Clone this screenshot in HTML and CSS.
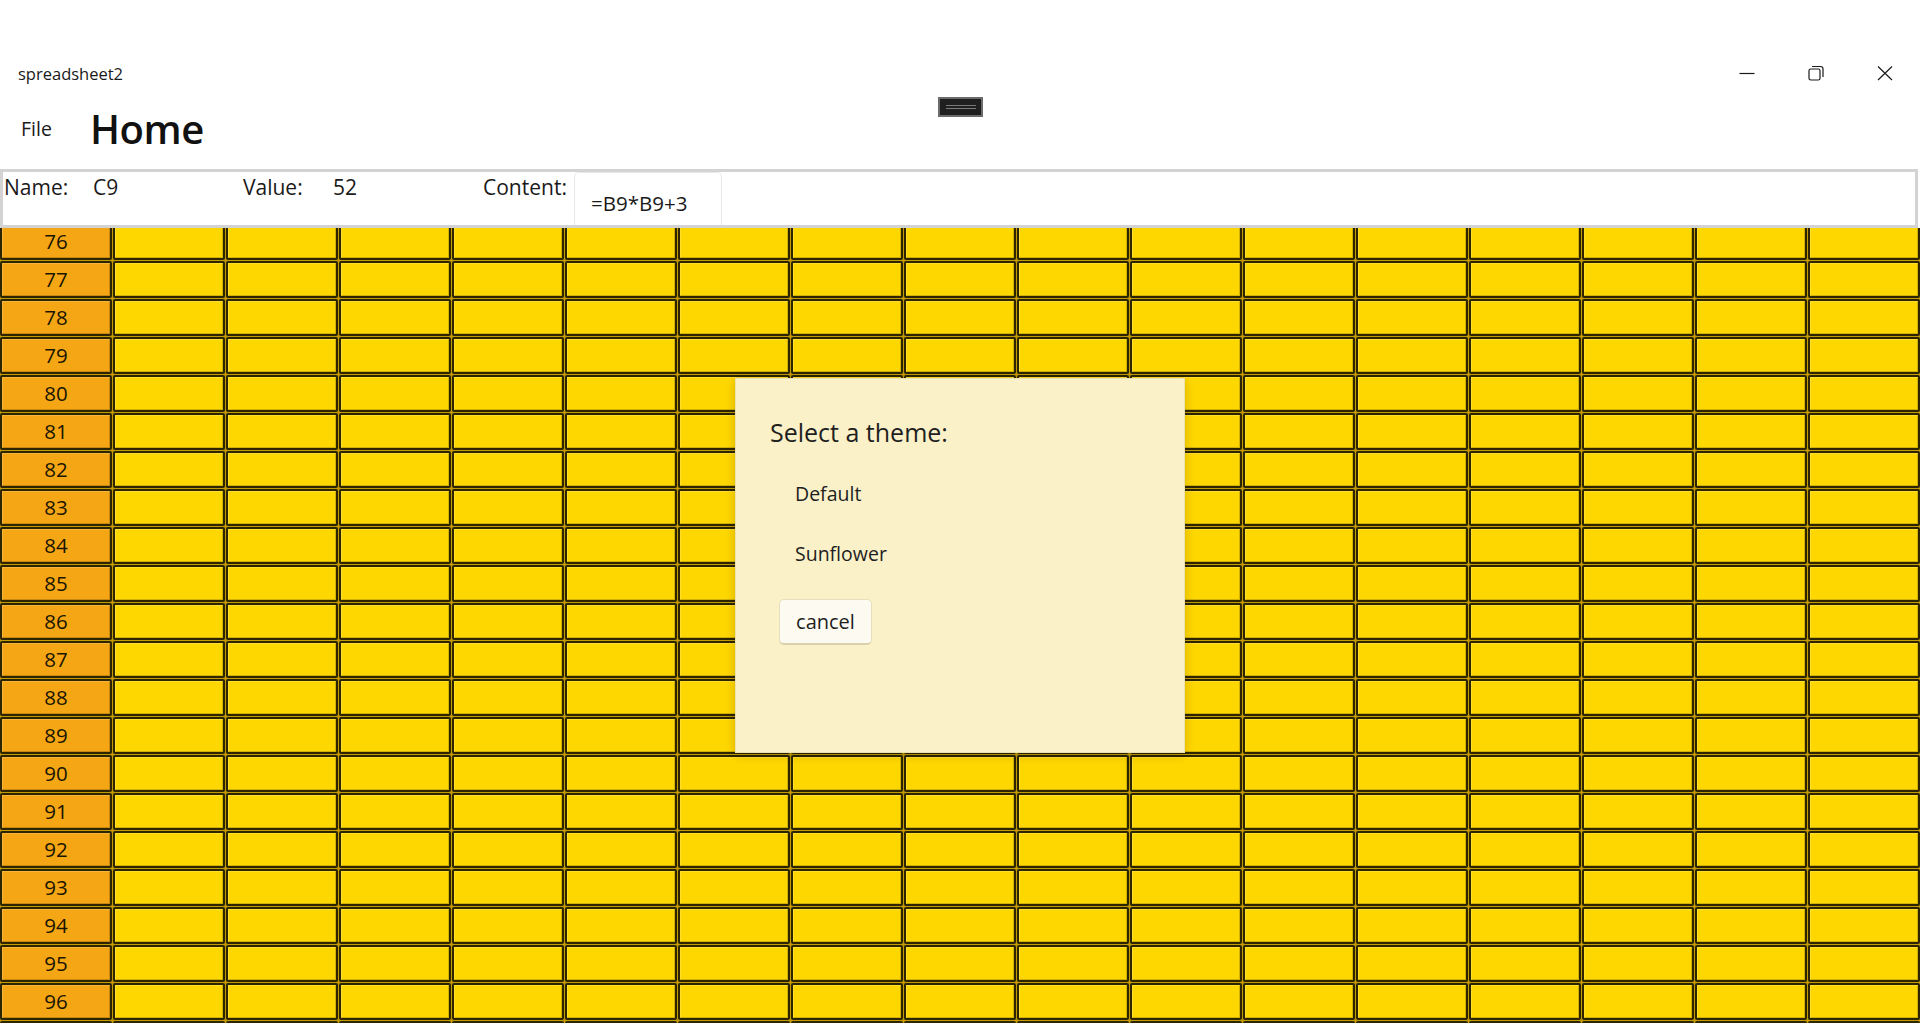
FILE: index.html
```html
<!DOCTYPE html>
<html>
<head>
<meta charset="utf-8">
<title>spreadsheet2</title>
<link rel="stylesheet" href="styles.css">
</head>
<body>
<div class="app">
  <div class="titlebar">
    <span class="apptitle">spreadsheet2</span>
    <div class="winctrls">
      <div class="wbtn"><svg width="16" height="16" viewBox="0 0 16 16"><path d="M0.5 8.5H15.5" stroke="#1a1a1a" stroke-width="1.2" fill="none"/></svg></div>
      <div class="wbtn"><svg width="16" height="16" viewBox="0 0 16 16"><rect x="1" y="4" width="11" height="11" rx="1.8" stroke="#1a1a1a" stroke-width="1.2" fill="none"/><path d="M4 1.5H12.5Q15 1.5 15 4V12" stroke="#1a1a1a" stroke-width="1.2" fill="none"/></svg></div>
      <div class="wbtn"><svg width="16" height="16" viewBox="0 0 16 16"><path d="M1 1.5L15 15M15 1.5L1 15" stroke="#1a1a1a" stroke-width="1.2" fill="none"/></svg></div>
    </div>
  </div>
  <div class="menubar">
    <span class="menu-file">File</span>
    <span class="menu-home">Home</span>
  </div>
  <div class="infobar">
    <span class="lbl lbl-name">Name:</span>
    <span class="val val-name">C9</span>
    <span class="lbl lbl-value">Value:</span>
    <span class="val val-value">52</span>
    <span class="lbl lbl-content">Content:</span>
    <div class="contentbox">=B9*B9+3</div>
  </div>
  <div class="gridview">
    <div class="grid">
      <div class="row"><div class="hd">76</div><span></span><span></span><span></span><span></span><span></span><span></span><span></span><span></span><span></span><span></span><span></span><span></span><span></span><span></span><span></span><span></span></div>
      <div class="row"><div class="hd">77</div><span></span><span></span><span></span><span></span><span></span><span></span><span></span><span></span><span></span><span></span><span></span><span></span><span></span><span></span><span></span><span></span></div>
      <div class="row"><div class="hd">78</div><span></span><span></span><span></span><span></span><span></span><span></span><span></span><span></span><span></span><span></span><span></span><span></span><span></span><span></span><span></span><span></span></div>
      <div class="row"><div class="hd">79</div><span></span><span></span><span></span><span></span><span></span><span></span><span></span><span></span><span></span><span></span><span></span><span></span><span></span><span></span><span></span><span></span></div>
      <div class="row"><div class="hd">80</div><span></span><span></span><span></span><span></span><span></span><span></span><span></span><span></span><span></span><span></span><span></span><span></span><span></span><span></span><span></span><span></span></div>
      <div class="row"><div class="hd">81</div><span></span><span></span><span></span><span></span><span></span><span></span><span></span><span></span><span></span><span></span><span></span><span></span><span></span><span></span><span></span><span></span></div>
      <div class="row"><div class="hd">82</div><span></span><span></span><span></span><span></span><span></span><span></span><span></span><span></span><span></span><span></span><span></span><span></span><span></span><span></span><span></span><span></span></div>
      <div class="row"><div class="hd">83</div><span></span><span></span><span></span><span></span><span></span><span></span><span></span><span></span><span></span><span></span><span></span><span></span><span></span><span></span><span></span><span></span></div>
      <div class="row"><div class="hd">84</div><span></span><span></span><span></span><span></span><span></span><span></span><span></span><span></span><span></span><span></span><span></span><span></span><span></span><span></span><span></span><span></span></div>
      <div class="row"><div class="hd">85</div><span></span><span></span><span></span><span></span><span></span><span></span><span></span><span></span><span></span><span></span><span></span><span></span><span></span><span></span><span></span><span></span></div>
      <div class="row"><div class="hd">86</div><span></span><span></span><span></span><span></span><span></span><span></span><span></span><span></span><span></span><span></span><span></span><span></span><span></span><span></span><span></span><span></span></div>
      <div class="row"><div class="hd">87</div><span></span><span></span><span></span><span></span><span></span><span></span><span></span><span></span><span></span><span></span><span></span><span></span><span></span><span></span><span></span><span></span></div>
      <div class="row"><div class="hd">88</div><span></span><span></span><span></span><span></span><span></span><span></span><span></span><span></span><span></span><span></span><span></span><span></span><span></span><span></span><span></span><span></span></div>
      <div class="row"><div class="hd">89</div><span></span><span></span><span></span><span></span><span></span><span></span><span></span><span></span><span></span><span></span><span></span><span></span><span></span><span></span><span></span><span></span></div>
      <div class="row"><div class="hd">90</div><span></span><span></span><span></span><span></span><span></span><span></span><span></span><span></span><span></span><span></span><span></span><span></span><span></span><span></span><span></span><span></span></div>
      <div class="row"><div class="hd">91</div><span></span><span></span><span></span><span></span><span></span><span></span><span></span><span></span><span></span><span></span><span></span><span></span><span></span><span></span><span></span><span></span></div>
      <div class="row"><div class="hd">92</div><span></span><span></span><span></span><span></span><span></span><span></span><span></span><span></span><span></span><span></span><span></span><span></span><span></span><span></span><span></span><span></span></div>
      <div class="row"><div class="hd">93</div><span></span><span></span><span></span><span></span><span></span><span></span><span></span><span></span><span></span><span></span><span></span><span></span><span></span><span></span><span></span><span></span></div>
      <div class="row"><div class="hd">94</div><span></span><span></span><span></span><span></span><span></span><span></span><span></span><span></span><span></span><span></span><span></span><span></span><span></span><span></span><span></span><span></span></div>
      <div class="row"><div class="hd">95</div><span></span><span></span><span></span><span></span><span></span><span></span><span></span><span></span><span></span><span></span><span></span><span></span><span></span><span></span><span></span><span></span></div>
      <div class="row"><div class="hd">96</div><span></span><span></span><span></span><span></span><span></span><span></span><span></span><span></span><span></span><span></span><span></span><span></span><span></span><span></span><span></span><span></span></div>
      <div class="row"><div class="hd"></div><span></span><span></span><span></span><span></span><span></span><span></span><span></span><span></span><span></span><span></span><span></span><span></span><span></span><span></span><span></span><span></span></div>
    </div>
  </div>
</div>
<div class="draghandle"><div class="grip"></div></div>
<div class="dialog">
  <div class="dlg-title">Select a theme:</div>
  <div class="dlg-item">Default</div>
  <div class="dlg-item">Sunflower</div>
  <button class="dlg-cancel">cancel</button>
</div>
</body>
</html>
```
FILE: styles.css
```css
html, body {
  margin: 0;
  padding: 0;
}
body {
  width: 1920px;
  height: 1034px;
  overflow: hidden;
  background: #ffffff;
  font-family: "Open Sans", "Noto Sans", sans-serif;
  color: #1b1b1b;
  position: relative;
}
.app {
  display: flex;
  flex-direction: column;
}
.titlebar {
  height: 48px;
  padding-top: 49px;
  display: flex;
  align-items: center;
  justify-content: space-between;
}
.apptitle {
  padding-left: 18px;
  font-size: 16.5px;
  color: #1a1a1a;
}
.winctrls {
  display: flex;
  padding-right: 1px;
}
.wbtn {
  width: 69px;
  height: 48px;
  display: flex;
  align-items: center;
  justify-content: center;
}
.menubar {
  height: 62px;
  display: flex;
  align-items: center;
  padding-left: 21px;
  margin-bottom: 10px;
}
.menu-file {
  font-size: 19.5px;
  width: 69px;
}
.menu-home {
  font-size: 40px;
  font-weight: 600;
  color: #111;
  letter-spacing: -0.5px;
}
.infobar {
  height: 53px;
  width: 1912px;
  border: 3px solid #d3d3d3;
  display: flex;
  align-items: flex-start;
  font-size: 21px;
  line-height: 30px;
  color: #1a1a1a;
}
.lbl-name { padding-left: 1px; width: 89px; }
.val-name { width: 150px; }
.lbl-value { width: 90px; }
.val-value { width: 150px; }
.lbl-content { width: 91px; }
.contentbox {
  width: 148px;
  height: 53px;
  box-sizing: border-box;
  border: 1px solid #e7e7e7;
  border-bottom: none;
  border-radius: 5px 5px 0 0;
  padding: 15px 0 0 16px;
  font-size: 20.5px;
  line-height: 30px;
  background: #ffffff;
}
.gridview {
  height: 795px;
  overflow: hidden;
  background: #c39b00;
}
.grid {
  margin-top: -5px;
  display: flex;
  flex-direction: column;
  gap: 1px;
}
.row {
  display: flex;
  gap: 1px;
  height: 37px;
}
.row > * {
  width: 112px;
  height: 37px;
  box-sizing: border-box;
  border: 2px solid #2c2500;
  border-radius: 2px;
  flex: none;
  box-shadow: inset 1px 1px 0 rgba(255,255,255,0.18), inset -1px -1px 0 rgba(0,0,0,0.18);
}
.row > span {
  background: #ffd700;
}
.hd {
  background: #f5a614;
  font-size: 20.5px;
  line-height: 32px;
  text-align: center;
  color: #1a1500;
}
.draghandle {
  position: absolute;
  left: 938px;
  top: 97px;
  width: 45px;
  height: 20px;
  box-sizing: border-box;
  border: 2px solid #6b6b6b;
  background: #1f1f1f;
  display: flex;
  align-items: center;
  justify-content: center;
}
.grip {
  width: 30px;
  height: 4px;
  box-sizing: border-box;
  border-top: 1px solid #7a7a7a;
  border-bottom: 1px solid #7a7a7a;
}
.dialog {
  position: absolute;
  left: 735px;
  top: 378px;
  width: 450px;
  height: 375px;
  box-sizing: border-box;
  background: #faf1c9;
  border: 1px solid #ebe1b0;
  box-shadow: 0 2px 10px rgba(0,0,0,0.18);
  padding: 36px 0 0 34px;
  display: flex;
  flex-direction: column;
  align-items: flex-start;
}
.dlg-title {
  font-size: 25px;
  line-height: 34px;
  color: #1e1e1e;
  margin-bottom: 15px;
}
.dlg-item {
  font-size: 19.5px;
  line-height: 60px;
  padding-left: 25px;
  color: #1e1e1e;
}
.dlg-cancel {
  margin-top: 15px;
  margin-left: 9px;
  width: 93px;
  height: 46px;
  font-family: inherit;
  font-size: 20px;
  color: #1e1e1e;
  background: #fdfbf1;
  border: 1px solid #e6dfbd;
  border-bottom: 2px solid #d9d1ac;
  border-radius: 5px;
  padding: 0;
}
```
